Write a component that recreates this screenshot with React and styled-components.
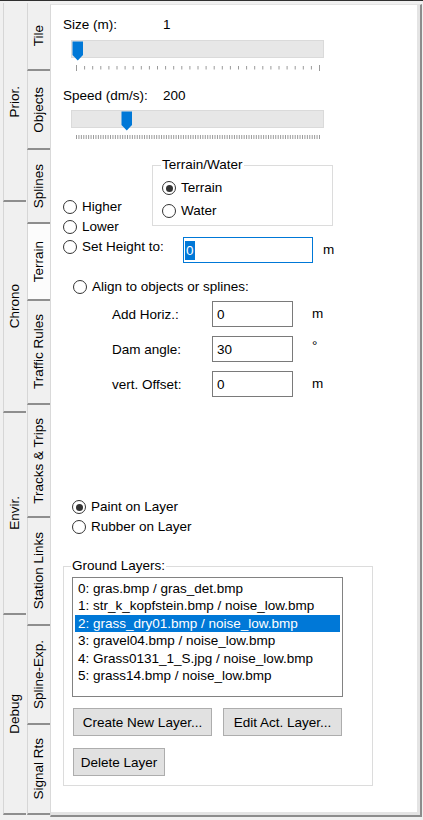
import React from 'react';
import styled, { createGlobalStyle } from 'styled-components';

const GlobalStyle = createGlobalStyle`
  html, body {
    margin: 0;
    padding: 0;
    background: #f0f0f0;
  }
  body {
    font-family: "Liberation Sans", Arial, sans-serif;
    font-size: 13.5px;
    color: #000;
  }
`;

const outerTabs = [
  { label: 'Prior.', h: 199 },
  { label: 'Chrono', h: 211 },
  { label: 'Envir.', h: 202 },
  { label: 'Debug', h: 200 },
];

const innerTabs = [
  { label: 'Tile', h: 68 },
  { label: 'Objects', h: 79 },
  { label: 'Splines', h: 74 },
  { label: 'Terrain', h: 77, active: true },
  { label: 'Traffic Rules', h: 104 },
  { label: 'Tracks & Trips', h: 113 },
  { label: 'Station Links', h: 108 },
  { label: 'Spline-Exp.', h: 99 },
  { label: 'Signal Rts', h: 90 },
];

const layers = [
  '0: gras.bmp / gras_det.bmp',
  '1: str_k_kopfstein.bmp / noise_low.bmp',
  '2: grass_dry01.bmp / noise_low.bmp',
  '3: gravel04.bmp / noise_low.bmp',
  '4: Grass0131_1_S.jpg / noise_low.bmp',
  '5: grass14.bmp / noise_low.bmp',
];

const Ticks = ({ count, long }) => {
  const span = 243;
  const lines = [];
  for (let i = 0; i < count; i++) {
    const x = 5.5 + (span * i) / (count - 1);
    const edge = i === 0 || i === count - 1;
    lines.push(
      <line key={i} x1={x} x2={x} y1={long && !edge ? 1 : 0} y2={long ? (edge ? 6 : 4.5) : 4}
        stroke="#9a9a9a" strokeWidth="1" />
    );
  }
  return (
    <TickBox width="253" height={long ? 6 : 4} $mt={5}>
      {lines}
    </TickBox>
  );
};

const Slider = ({ value, min, max, mt }) => {
  const pos = ((value - min) / (max - min)) * 243;
  return (
    <Track $mt={mt}>
      <Thumb width="12" height="20" viewBox="0 0 12 20" style={{ left: pos }}>
        <path d="M0.5 0.5 H11 V14 L5.75 19.5 L0.5 14 Z" fill="#0078d7" />
      </Thumb>
    </Track>
  );
};

const Radio = ({ checked, children }) => (
  <RadioOption>
    <RadioDot $checked={checked} />
    <span>{children}</span>
  </RadioOption>
);

const App = () => {
  return (
    <>
      <GlobalStyle />
      <Window>
        <TabColumn $ml={3}>
          {outerTabs.map((t) => (
            <Tab key={t.label} $h={t.h}>
              <TabText>{t.label}</TabText>
            </Tab>
          ))}
        </TabColumn>
        <TabColumn $ml={1}>
          {innerTabs.map((t) => (
            <Tab key={t.label} $h={t.h} $active={t.active}>
              <TabText>{t.label}</TabText>
            </Tab>
          ))}
        </TabColumn>

        <Panel>
          <ValueRow $mt={0}>
            <ValueLabel>Size (m):</ValueLabel>
            <span>1</span>
          </ValueRow>
          <Slider value={1} min={1} max={31} mt={7} />
          <Ticks count={31} long />

          <ValueRow $mt={17}>
            <ValueLabel>Speed (dm/s):</ValueLabel>
            <span>200</span>
          </ValueRow>
          <Slider value={200} min={0} max={1000} mt={6} />
          <Ticks count={101} />

          <TerrainBlock>
            <RadioColumn>
              <Radio>Higher</Radio>
              <Radio>Lower</Radio>
            </RadioColumn>
            <TerrainGroup>
              <Legend>Terrain/Water</Legend>
              <Radio checked>Terrain</Radio>
              <Radio>Water</Radio>
            </TerrainGroup>
          </TerrainBlock>

          <HeightRow>
            <HeightLabel>
              <Radio>Set Height to:</Radio>
            </HeightLabel>
            <TextBox $w={130} $focus>
              <Selected>0</Selected>
            </TextBox>
            <Unit $ml={10}>m</Unit>
          </HeightRow>

          <IndentRow $mt={14} $pl={22}>
            <Radio>Align to objects or splines:</Radio>
          </IndentRow>

          <FieldList>
            <FieldRow>
              <FieldLabel>Add Horiz.:</FieldLabel>
              <TextBox $w={81}>0</TextBox>
              <Unit $ml={19}>m</Unit>
            </FieldRow>
            <FieldRow>
              <FieldLabel>Dam angle:</FieldLabel>
              <TextBox $w={81}>30</TextBox>
              <Unit $ml={19} $raised>°</Unit>
            </FieldRow>
            <FieldRow>
              <FieldLabel>vert. Offset:</FieldLabel>
              <TextBox $w={81}>0</TextBox>
              <Unit $ml={19}>m</Unit>
            </FieldRow>
          </FieldList>

          <IndentRow $mt={100} $pl={21}>
            <Radio checked>Paint on Layer</Radio>
          </IndentRow>
          <IndentRow $mt={0} $pl={21}>
            <Radio>Rubber on Layer</Radio>
          </IndentRow>

          <LayerGroup>
            <Legend>Ground Layers:</Legend>
            <ListBox>
              {layers.map((l, i) => (
                <ListItem key={l} $selected={i === 2}>{l}</ListItem>
              ))}
            </ListBox>
            <ButtonRow $mt={11}>
              <Button $w={139}>Create New Layer...</Button>
              <Button $w={119}>Edit Act. Layer...</Button>
            </ButtonRow>
            <ButtonRow $mt={12}>
              <Button $w={92}>Delete Layer</Button>
            </ButtonRow>
          </LayerGroup>
        </Panel>
      </Window>
    </>
  );
};

const Window = styled.div`
  width: 423px;
  height: 820px;
  box-sizing: border-box;
  border-top: 1px solid #2f2f2f;
  padding-top: 2px;
  display: flex;
  align-items: flex-start;
`;

const TabColumn = styled.div`
  display: flex;
  flex-direction: column;
  width: 23px;
  flex-shrink: 0;
  margin-left: ${(p) => p.$ml}px;
`;

const Tab = styled.div`
  height: ${(p) => p.$h}px;
  box-sizing: border-box;
  display: flex;
  align-items: center;
  justify-content: center;
  background: ${(p) => (p.$active ? '#fcfcfc' : '#f0f0f0')};
  border-left: 1px solid #d6d6d6;
  border-bottom: 2px solid #8e8e8e;
`;

const TabText = styled.span`
  writing-mode: vertical-rl;
  transform: rotate(180deg);
  font-size: 13.5px;
  white-space: nowrap;
  line-height: 1;
`;

const Panel = styled.div`
  flex: 1;
  height: 813px;
  margin-top: 1px;
  margin-right: 1px;
  box-sizing: border-box;
  background: #fff;
  border-left: 1px solid #d9d9d9;
  border-top: 1px solid #e3e3e3;
  border-right: 2px solid #8c8c8c;
  border-bottom: 2px solid #8c8c8c;
  box-shadow: inset -3px -3px 0 #e4e4e4;
  padding-top: 12px;
  display: flex;
  flex-direction: column;
  align-items: flex-start;
`;

const ValueRow = styled.div`
  display: flex;
  height: 16px;
  line-height: 16px;
  padding-left: 12px;
  margin-top: ${(p) => p.$mt}px;
`;

const ValueLabel = styled.span`
  width: 100px;
`;

const Track = styled.div`
  position: relative;
  width: 253px;
  height: 18px;
  margin-top: ${(p) => p.$mt}px;
  margin-bottom: 2px;
  margin-left: 20px;
  box-sizing: border-box;
  background: #e7e7e7;
  border: 1px solid #dadada;
`;

const Thumb = styled.svg`
  position: absolute;
  top: 0;
  display: block;
`;

const TickBox = styled.svg`
  display: block;
  margin-left: 20px;
  margin-top: ${(p) => p.$mt}px;
`;

const RadioOption = styled.label`
  display: flex;
  align-items: center;
  gap: 5px;
  height: 20px;
  line-height: 16px;
  white-space: nowrap;
`;

const RadioDot = styled.span`
  width: 14px;
  height: 14px;
  box-sizing: border-box;
  border-radius: 50%;
  border: 1px solid #333;
  background: #fff;
  display: flex;
  align-items: center;
  justify-content: center;
  flex-shrink: 0;

  &::after {
    content: '';
    width: 7px;
    height: 7px;
    border-radius: 50%;
    background: ${(p) => (p.$checked ? '#333' : 'transparent')};
  }
`;

const TerrainBlock = styled.div`
  display: flex;
  align-items: flex-start;
  margin-top: 18px;
  padding-left: 12px;
  height: 80px;
`;

const RadioColumn = styled.div`
  width: 89px;
  padding-top: 40px;
  display: flex;
  flex-direction: column;
`;

const TerrainGroup = styled.fieldset`
  width: 181px;
  box-sizing: border-box;
  margin: 0;
  border: 1px solid #dcdcdc;
  padding: 5px 9px 4px 9px;
  display: flex;
  flex-direction: column;
  gap: 3px;
`;

const Legend = styled.legend`
  padding: 0 1px;
  margin-left: -1px;
  line-height: 16px;
  height: 16px;
`;

const HeightRow = styled.div`
  display: flex;
  align-items: flex-start;
  padding-left: 12px;
  height: 26px;
`;

const HeightLabel = styled.div`
  width: 120px;
`;

const TextBox = styled.div`
  width: ${(p) => p.$w}px;
  height: 26px;
  box-sizing: border-box;
  border: 1px solid ${(p) => (p.$focus ? '#0078d7' : '#7a7a7a')};
  padding-left: ${(p) => (p.$focus ? 1 : 4)}px;
  display: flex;
  align-items: center;
  background: #fff;
`;

const Selected = styled.span`
  background: #0078d7;
  color: #fff;
  height: 19px;
  line-height: 19px;
  padding: 0 1px;
`;

const Unit = styled.span`
  margin-left: ${(p) => p.$ml}px;
  line-height: 20px;
  align-self: ${(p) => (p.$raised ? 'flex-start' : 'center')};
`;

const IndentRow = styled.div`
  margin-top: ${(p) => p.$mt}px;
  padding-left: ${(p) => p.$pl}px;
`;

const FieldList = styled.div`
  display: flex;
  flex-direction: column;
  gap: 9px;
  margin-top: 4px;
`;

const FieldRow = styled.div`
  display: flex;
  align-items: center;
  padding-left: 61px;
`;

const FieldLabel = styled.span`
  width: 100px;
`;

const LayerGroup = styled.fieldset`
  width: 310px;
  box-sizing: border-box;
  margin: 21px 0 0 12px;
  border: 1px solid #dcdcdc;
  padding: 3px 8px 9px 8px;
`;

const ListBox = styled.div`
  width: 271px;
  height: 120px;
  box-sizing: border-box;
  border: 1px solid #828282;
  padding: 1.5px 1px 0 1px;
`;

const ListItem = styled.div`
  height: 17.5px;
  line-height: 17.5px;
  padding-left: 3px;
  margin: 0 1px 0 1px;
  white-space: nowrap;
  background: ${(p) => (p.$selected ? '#0078d7' : 'transparent')};
  color: ${(p) => (p.$selected ? '#fff' : '#000')};
`;

const ButtonRow = styled.div`
  display: flex;
  gap: 11px;
  margin-top: ${(p) => p.$mt}px;
  padding-left: 1px;
`;

const Button = styled.button`
  width: ${(p) => p.$w}px;
  height: 28px;
  box-sizing: border-box;
  padding: 0;
  background: #e1e1e1;
  border: 1px solid #adadad;
  font-family: "Liberation Sans", Arial, sans-serif;
  font-size: 13.5px;
  color: #000;
`;

export default App;
